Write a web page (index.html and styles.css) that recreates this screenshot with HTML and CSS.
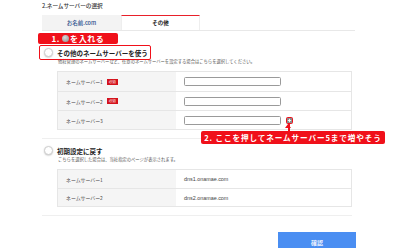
FILE: index.html
```html
<!DOCTYPE html>
<html lang="ja">
<head>
<meta charset="utf-8">
<link rel="stylesheet" href="styles.css">
</head>
<body>
<div class="page">
  <div class="title">2.ネームサーバーの選択</div>
  <div class="tabs">
    <div class="tab tab-off">お名前.com</div>
    <div class="tab tab-on">その他</div>
  </div>

  <div class="option first">
    <div class="opt-head marked">
      <span class="radio"></span>
      <span class="opt-title">その他のネームサーバーを使う</span>
    </div>
    <p class="desc">他社管理のネームサーバーなど、任意のネームサーバーを設定する場合はこちらを選択してください。</p>
    <div class="table">
      <div class="row">
        <div class="cell-label">ネームサーバー1<span class="req">必須</span></div>
        <div class="cell-value"><span class="input"></span></div>
      </div>
      <div class="row">
        <div class="cell-label">ネームサーバー2<span class="req">必須</span></div>
        <div class="cell-value"><span class="input"></span></div>
      </div>
      <div class="row">
        <div class="cell-label">ネームサーバー3</div>
        <div class="cell-value"><span class="input"></span>
          <span class="plus"><svg width="7" height="7" viewBox="0 0 7 7"><rect x="0.5" y="0.5" width="6" height="6" rx="1" fill="#8a8a8a" stroke="#f0101a" stroke-width="1"/><path d="M3.5 1.8v3.4M1.8 3.5h3.4" stroke="#fff" stroke-width="0.9"/></svg></span>
        </div>
      </div>
    </div>
  </div>

  <div class="sep"></div>

  <div class="option">
    <div class="opt-head">
      <span class="radio"></span>
      <span class="opt-title">初期設定に戻す</span>
    </div>
    <p class="desc">こちらを選択した場合は、当社指定のページが表示されます。</p>
    <div class="table t2">
      <div class="row">
        <div class="cell-label">ネームサーバー1</div>
        <div class="cell-value text">dns1.onamae.com</div>
      </div>
      <div class="row">
        <div class="cell-label">ネームサーバー2</div>
        <div class="cell-value text">dns2.onamae.com</div>
      </div>
    </div>
  </div>

  <div class="sep"></div>

  <div class="actions">
    <button class="btn">確認</button>
  </div>

  <div class="note note1">1. <span class="dot"></span>を入れる</div>
  <div class="note note2">2. ここを押してネームサーバー5まで増やそう</div>
  <div class="arrow"></div>
</div>
</body>
</html>
```

FILE: styles.css
```css
* { box-sizing: border-box; }
html, body { margin: 0; padding: 0; background: #fff; }
body {
  width: 400px;
  height: 248px;
  overflow: hidden;
  font-family: "Noto Sans CJK JP", "Noto Sans", sans-serif;
  color: #333;
}
.page {
  position: relative;
  padding: 3px 44px 0 42px;
}
.title {
  font-size: 5.6px;
  line-height: 7px;
  color: #333;
  font-weight: 500;
}
.tabs {
  display: flex;
  margin-top: 5px;
  border-bottom: 1px solid #e8e8e8;
  width: 313px;
}
.tab {
  width: 79px;
  height: 15px;
  display: flex;
  align-items: center;
  justify-content: center;
  font-size: 5.5px;
}
.tab-off {
  background: #f3f3f3;
  color: #2c4f8c;
  font-weight: 500;
  border-top: 1px solid #f3f3f3;
}
.tab-on {
  background: #fff;
  border-top: 1px solid #e8202a;
  border-left: 1px solid #eee;
  border-right: 1px solid #eee;
  font-weight: bold;
  color: #222;
}
.option { margin-top: 7px; }
.option.first { margin-top: 17px; }
.opt-head {
  display: flex;
  align-items: center;
  height: 9px;
  width: 104px;
  margin-left: 2px;
  position: relative;
}
.opt-head.marked::after {
  content: "";
  position: absolute;
  left: -5px;
  top: -3px;
  width: 110px;
  height: 13px;
  border: 1.3px solid #f0101a;
  border-radius: 2px;
}
.radio {
  width: 9px;
  height: 9px;
  border-radius: 50%;
  background: #fff;
  border: 0.5px solid #cfcfcf;
  box-shadow: 0 0.5px 1.5px rgba(0,0,0,0.25);
  flex: none;
}
.opt-title {
  margin-left: 4px;
  font-size: 6.5px;
  font-weight: bold;
  color: #222;
  white-space: nowrap;
}
.desc {
  margin: 1px 0 0 16px;
  font-size: 4.3px;
  line-height: 6px;
  color: #555;
  white-space: nowrap;
}
.table {
  margin: 7px 0 0 15px;
  width: 295px;
  border: 1px solid #e6e6e6;
}
.row {
  display: flex;
  height: 19px;
  border-top: 1px solid #e6e6e6;
}
.row:first-child { border-top: none; }
.t2 .row { height: 18px; }
.cell-label {
  width: 118px;
  background: #f5f5f5;
  display: flex;
  align-items: center;
  padding-left: 8px;
  font-size: 4.9px;
  color: #444;
}
.req {
  margin-left: 4px;
  background: #d4121c;
  color: #fff;
  font-size: 3.6px;
  padding: 1px 2px;
  line-height: 4px;
}
.cell-value {
  display: flex;
  align-items: center;
  padding-left: 8px;
  flex: 1;
}
.cell-value.text {
  font-size: 5.4px;
  color: #444;
  font-family: "Liberation Sans", Arial, sans-serif;
}
.input {
  width: 97px;
  height: 9px;
  border: 0.6px solid #9a9a9a;
  border-radius: 1.5px;
  background: #fff;
}
.plus {
  margin-left: 5px;
  width: 7px;
  height: 7px;
  display: flex;
}
.sep {
  margin-top: 8px;
  width: 310px;
  border-top: 1px solid #efefef;
}
.actions {
  display: flex;
  justify-content: flex-end;
  margin-top: 16px;
}
.btn {
  width: 78px;
  height: 20px;
  border: none;
  background: #4a8ef2;
  color: #fff;
  font-family: "Noto Sans CJK JP", sans-serif;
  font-size: 6px;
  font-weight: 500;
  padding: 0;
}
.note {
  position: absolute;
  background: #f0101a;
  color: #fff;
  font-weight: bold;
  display: flex;
  align-items: center;
  justify-content: center;
  border-radius: 2px;
  white-space: nowrap;
}
.note1 {
  left: 38px;
  top: 33px;
  width: 80px;
  height: 11px;
  font-size: 8px;
  letter-spacing: 0.6px;
}
.dot {
  display: inline-block;
  width: 7px;
  height: 7px;
  border-radius: 50%;
  background: radial-gradient(circle at 40% 35%, #d8d8d8, #8c8c8c);
  margin: 0 1px 0 2px;
}
.note2 {
  left: 201px;
  top: 131px;
  width: 184px;
  height: 13px;
  font-size: 7.6px;
  letter-spacing: 0.9px;
}
.arrow {
  position: absolute;
  left: 287.5px;
  top: 124px;
  width: 2px;
  height: 8px;
  background: #f0101a;
}
.arrow::before {
  content: "";
  position: absolute;
  left: -2.5px;
  top: 0;
  border-left: 3.5px solid transparent;
  border-right: 3.5px solid transparent;
  border-bottom: 4px solid #f0101a;
}
```
